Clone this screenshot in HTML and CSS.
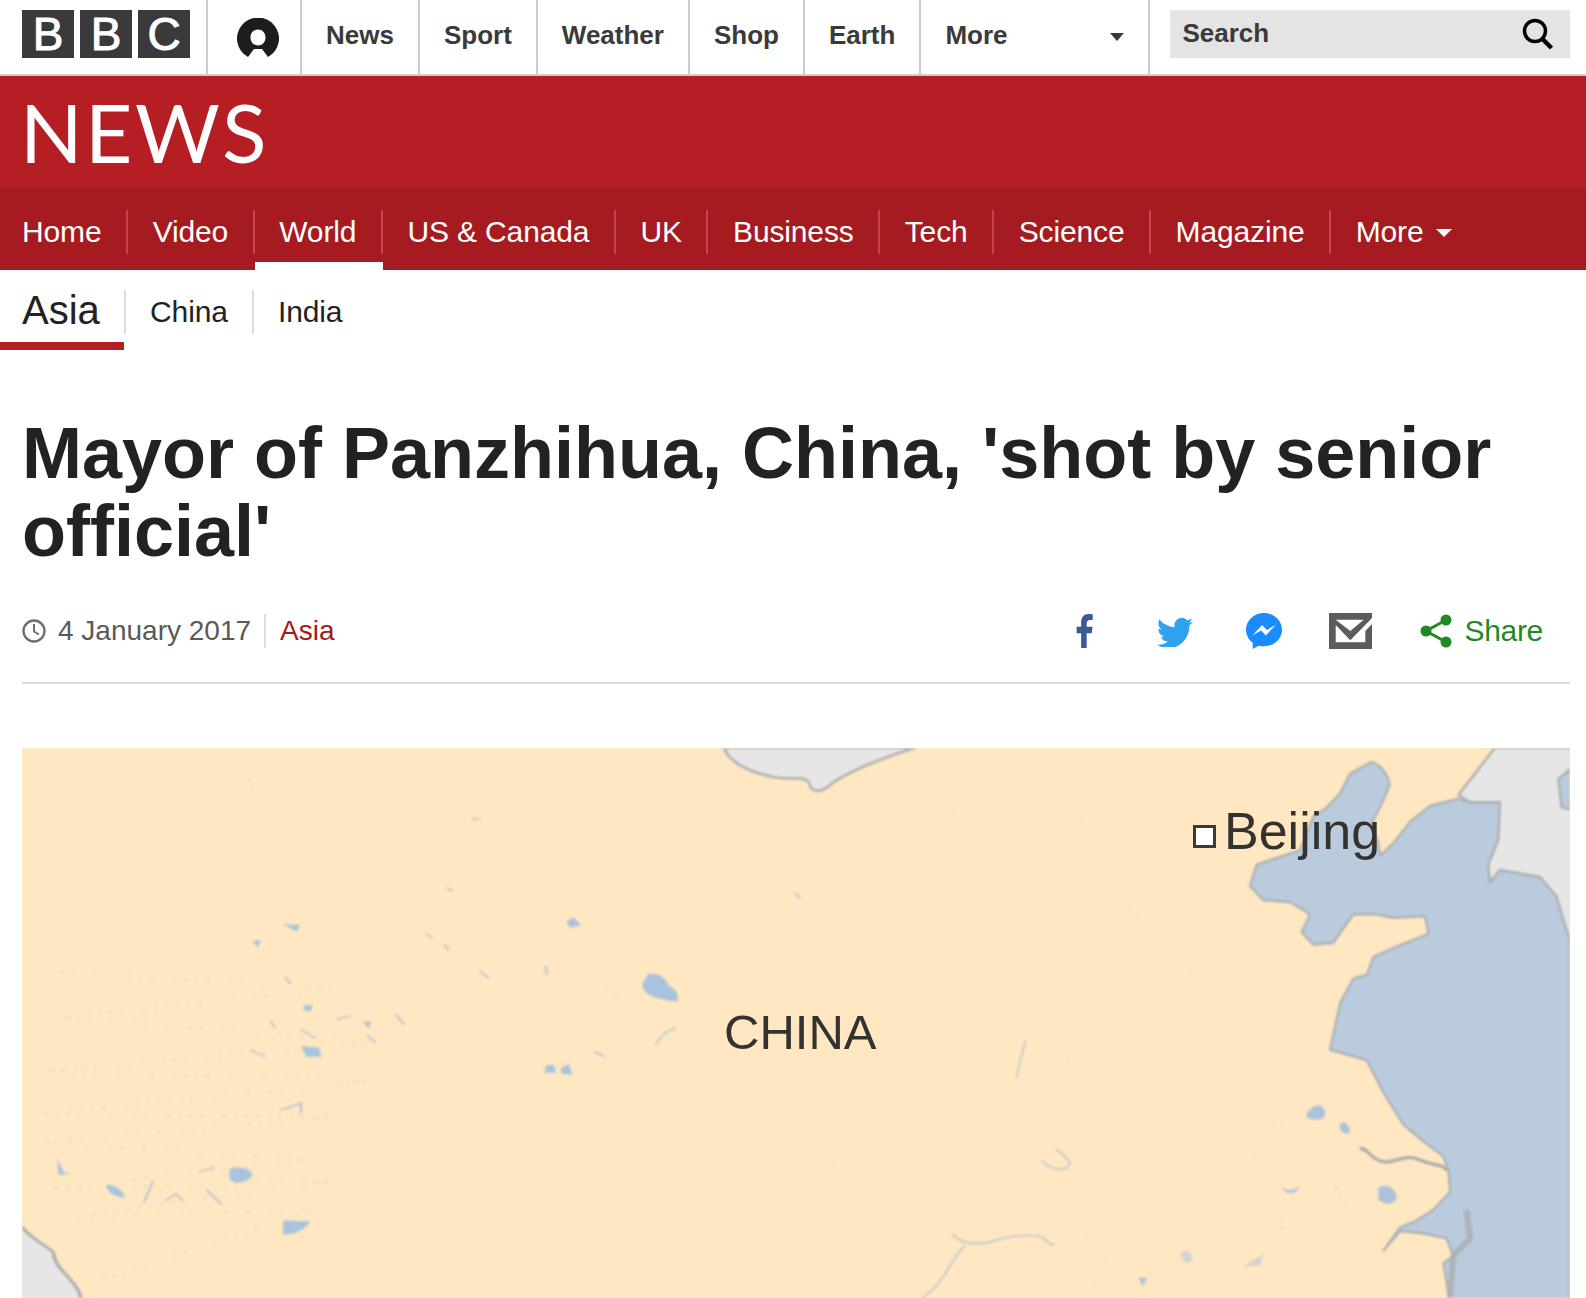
FILE: index.html
```html
<!DOCTYPE html>
<html lang="en">
<head>
    <meta charset="UTF-8">
    <title>Mayor of Panzhihua, China, 'shot by senior official' - BBC News</title>
    <link rel="stylesheet" href="styles.css">
</head>
<body>
    <header class="masthead">
        <div class="bbc-logo">
            <span class="bbc-block">B</span>
            <span class="bbc-block">B</span>
            <span class="bbc-block">C</span>
        </div>
        <div class="user-cell">
            <svg class="user-icon" viewBox="0 0 42 39">
                <path fill-rule="evenodd" d="M11 39A21 21 0 1 1 31 39L25 31H17zM21 11.500c-4.300 0-7.500 3.500-7.500 8s3.200 8 7.500 8 7.500-3.500 7.500-8-3.200-8-7.500-8z" fill="#1d1d1d"/>
            </svg>
        </div>
        <a class="top-link">News</a>
        <a class="top-link">Sport</a>
        <a class="top-link">Weather</a>
        <a class="top-link">Shop</a>
        <a class="top-link">Earth</a>
        <a class="top-link top-more">More <span class="top-arrow"></span></a>
        <div class="search-cell">
            <div class="search-box">
                <span>Search</span>
                <svg class="search-icon" viewBox="0 0 32 32">
                    <circle cx="13" cy="13" r="10.500" fill="none" stroke="#000" stroke-width="3.500"/>
                    <path d="M20.500 21l9 9" stroke="#000" stroke-width="4.500" fill="none"/>
                </svg>
            </div>
        </div>
    </header>

    <div class="news-band">
        <div class="news-logo">NEWS</div>
    </div>

    <nav class="section-nav">
        <a class="section-link">Home</a>
        <a class="section-link">Video</a>
        <a class="section-link active">World</a>
        <a class="section-link">US &amp; Canada</a>
        <a class="section-link">UK</a>
        <a class="section-link">Business</a>
        <a class="section-link">Tech</a>
        <a class="section-link">Science</a>
        <a class="section-link">Magazine</a>
        <a class="section-link last">More <span class="section-arrow"></span></a>
    </nav>

    <nav class="sub-nav">
        <a class="sub-current">Asia</a>
        <a class="sub-link">China</a>
        <a class="sub-link">India</a>
    </nav>

    <main class="story">
        <h1 class="headline">Mayor of Panzhihua, China, 'shot by senior official'</h1>

        <div class="meta-row">
            <div class="meta-left">
                <svg class="clock-icon" viewBox="0 0 24 24">
                    <circle cx="12" cy="12" r="10.500" fill="none" stroke="#6e6e6e" stroke-width="2.400"/>
                    <path d="M12 5v7.500l5 3" fill="none" stroke="#6e6e6e" stroke-width="2"/>
                </svg>
                <span class="meta-date">4 January 2017</span>
                <a class="meta-section">Asia</a>
            </div>
            <div class="share-row">
                <svg class="icon-fb" viewBox="5 0 14 24" preserveAspectRatio="none">
                    <path d="M9 24V13.500H5.500V9H9V6c0-3.800 2.200-6 5.600-6 1.700 0 3.400.2 3.400.2V4.300h-2c-1.900 0-2.700 1-2.700 2.500V9h4.600l-.7 4.500h-3.900V24z" fill="#3b5998"/>
                </svg>
                <svg class="icon-tw" viewBox="0 1 24 20" preserveAspectRatio="none">
                    <path d="M23.953 4.570a10 10 0 01-2.825.775 4.958 4.958 0 002.163-2.723c-.951.555-2.005.959-3.127 1.184a4.920 4.920 0 00-8.384 4.482C7.690 8.095 4.067 6.130 1.640 3.162a4.822 4.822 0 00-.666 2.475c0 1.710.870 3.213 2.188 4.096a4.904 4.904 0 01-2.228-.616v.060a4.923 4.923 0 003.946 4.827 4.996 4.996 0 01-2.212.085 4.936 4.936 0 004.604 3.417 9.867 9.867 0 01-6.102 2.105c-.390 0-.779-.023-1.170-.067a13.995 13.995 0 007.557 2.209c9.053 0 13.998-7.496 13.998-13.985 0-.210 0-.420-.015-.630A9.935 9.935 0 0024 4.590z" fill="#2ea1ef"/>
                </svg>
                <svg class="icon-ms" viewBox="0 0 24 24">
                    <path d="M12 0C5.370 0 0 4.970 0 11.110c0 3.500 1.740 6.610 4.470 8.650V24l4.090-2.240c1.090.300 2.250.460 3.440.460 6.630 0 12-4.970 12-11.110S18.630 0 12 0zm1.190 14.960l-3.060-3.260-5.960 3.260 6.560-6.960 3.130 3.260 5.890-3.260-6.560 6.960z" fill="#1a8cff"/>
                </svg>
                <svg class="icon-mail" viewBox="0 0 43 36">
                    <rect width="43" height="36" fill="#5c5c5c"/>
                    <path d="M6.700 6.700H34.700L21.300 18zM6.700 12L21.300 27.300 43 5V11L36.300 18V29.300H6.700z" fill="#fff"/>
                </svg>
                <div class="share-group">
                    <svg class="icon-share" viewBox="0 0 32 34">
                        <circle cx="26" cy="6" r="5.500" fill="#1f8a24"/>
                        <circle cx="26" cy="28" r="5.500" fill="#1f8a24"/>
                        <circle cx="6" cy="17" r="5.500" fill="#1f8a24"/>
                        <path d="M26 6L6 17l20 11" fill="none" stroke="#1f8a24" stroke-width="3"/>
                    </svg>
                    <span class="share-text">Share</span>
                </div>
            </div>
        </div>

        <div class="map">
            <svg class="map-art" viewBox="0 0 1548 550">
                <!-- east coast, traced -->
                <g transform="translate(1078,-8) scale(.3333,.3559)">
                    <path class="sea" d="M815 62C845 70 870 105 868 130L845 180 815 235 835 290 840 325 880 290 930 230 990 185 1075 165 1110 175 1200 175 1410 175 1410 1580 1050 1580 1030 1470 1060 1450 1040 1400 960 1385 900 1380 850 1435 900 1370 950 1350 1000 1320 1050 1270 1045 1210 1030 1170 960 1120 910 1080 850 990 800 900 690 870 720 740 760 670 800 660 820 610 890 580 985 545 975 495 880 500 830 490 760 490 700 570 640 575 605 540 630 490 570 455 490 450 450 410 470 350 600 310 640 215 680 190 720 150 750 95z"/>
                    <path class="sea" d="M1360 60H1430V210H1360z"/>
                    <path class="other" d="M1185 22H1420V75L1375 110 1385 190 1420 195V590L1395 520 1370 440 1320 385 1200 365 1170 400 1165 350 1195 280 1200 175 1110 175 1075 155z"/>
                    <path class="shore" d="M780 1150C800 1140 810 1180 850 1185S910 1160 960 1180 1030 1190 1040 1210"/>
                    <path class="coast-thick" d="M1100 1320L1110 1400 1060 1450 1050 1568"/>
                    <path class="lake" d="M620 1050C640 1020 670 1020 675 1045S640 1070 620 1060zM720 1080C735 1065 750 1085 750 1105 730 1110 715 1095 720 1080zM835 1260C860 1240 890 1265 890 1285S850 1310 835 1290zM545 1255C565 1270 585 1265 600 1255 585 1280 560 1280 545 1255z"/>
                    <path class="lake-pale" d="M430 1480L490 1445 480 1475z"/>
                    <path class="dots" d="M480 1090L620 1070M420 1190L500 1170M710 1260L740 1310M540 1350L550 1390M240 1420L280 1440 210 1500"/>
                </g>
                <!-- mongolia edge and the lake by the label -->
                <g transform="translate(618,-8) scale(.3571,.3559)">
                    <path class="other" d="M235 22C250 60 300 90 380 105 430 112 470 100 475 125 480 148 510 150 540 120 600 80 680 50 770 22z"/>
                    <path class="lake" d="M20 660C45 650 70 665 80 690 100 700 110 715 105 735 70 730 25 725 10 700 0 680 15 680 20 660z"/>
                    <path class="shore-thin" d="M45 855C60 830 75 815 100 810M1080 845C1070 880 1060 915 1055 950M1125 1180C1150 1210 1190 1215 1205 1190 1195 1170 1170 1155 1165 1150M875 1388C900 1420 960 1420 1000 1405S1100 1390 1120 1395 1140 1420 1160 1418M910 1420C880 1450 870 1480 840 1520 830 1540 800 1560 790 1568"/>
                    <path class="lake" d="M1395 1510L1420 1512 1408 1535z"/>
                    <path class="lake-pale" d="M1515 1440C1530 1430 1550 1440 1545 1465 1530 1475 1515 1460 1515 1440z"/>
                    <path class="dots" d="M875 210L885 225M430 430L445 440M1235 232L1245 235M1370 480L1410 490M1545 660L1555 655M1200 900L1250 910M820 1155L830 1160M540 1200L550 1205M590 1350L600 1355M1250 1385L1260 1390M1300 1455L1315 1450M1270 1520L1280 1530"/>
                </g>
                <!-- tibet lakes and the far corner -->
                <g transform="translate(-22,-8) scale(.5102,.3559)">
                    <path class="other" d="M30 1370H44C60 1400 90 1420 105 1440 105 1480 140 1510 150 1540 158 1550 158 1570 160 1590H30z"/>
                    <path class="lake" d="M555 518L588 520 582 538zM495 565L512 563 505 582zM1110 510L1125 498 1138 520 1118 528zM1070 915L1085 912 1090 935 1068 935zM1100 920L1115 910 1122 940 1100 938zM450 1205C470 1195 495 1205 495 1225 480 1245 460 1250 450 1235zM208 1250C225 1248 240 1265 245 1285 225 1285 210 1270 208 1250zM555 1350L608 1352C600 1375 575 1390 555 1390zM112 1175L125 1215 140 1218 115 1222zM590 860L625 865 630 890 600 890zM595 745L612 745 610 762 597 762zM712 790L728 792 722 810z"/>
                    <path class="shore-thin" d="M558 665L570 685M940 650L958 668M775 770L792 800M590 815L620 838M490 870L520 890M660 785L685 775M300 1240L282 1300M325 1295L345 1275 358 1295M405 1265L435 1305M390 1215L420 1200M550 1040L590 1020 590 1050M720 830L735 850M530 790L540 810M1070 635L1072 660M1165 875L1185 890M870 575L880 590M835 545L848 555M925 222H940M875 415L888 425M1560 430L1568 445"/>
                    <path class="dots" d="M100 650L650 700 120 780 740 850 90 930 720 960 80 1050 650 1060 90 1130 600 1180 100 1260 650 1240 150 1340 620 1320 190 1520M480 90L500 150M1150 680L1220 720"/>
                </g>
            </svg>
            <span class="map-square"></span>
            <span class="map-city">Beijing</span>
            <span class="map-country">CHINA</span>
        </div>
    </main>
</body>
</html>
```

FILE: styles.css
```css
html, body {
    margin: 0;
    padding: 0;
    height: 1298px;
    overflow: hidden;
}

body {
    background-color: #fff;
    color: #222;
    font-family: "Liberation Sans", Arial, sans-serif;
}

/* top bbc bar */
.masthead {
    display: flex;
    height: 74px;
    border-bottom: 2px solid #ccc;
}

.bbc-logo {
    display: flex;
    gap: 6px;
    width: 184px;
    padding: 10px 0 0 22px;
}

.bbc-block {
    width: 52px;
    height: 48px;
    background-color: #3a3a3a;
    color: #fff;
    font-size: 46px;
    line-height: 49px;
    text-align: center;
    -webkit-text-stroke: 1px #fff;
}

.user-cell {
    display: flex;
    align-items: center;
    width: 92px;
    border-left: 2px solid #ccc;
}

.user-icon {
    width: 42px;
    height: 39px;
    margin: 0 0 -1px 29px;
}

.top-link {
    display: flex;
    align-items: center;
    padding: 0 24px 4px;
    border-left: 2px solid #ccc;
    color: #3a3a3a;
    font-size: 26px;
    font-weight: bold;
}

.top-more {
    position: relative;
    width: 179px;
}

.top-arrow {
    position: absolute;
    top: 33px;
    right: 24px;
    border-top: 8px solid #3a3a3a;
    border-left: 7px solid transparent;
    border-right: 7px solid transparent;
}

.search-cell {
    flex: 1;
    padding: 10px 16px 0 20px;
    border-left: 2px solid #ccc;
}

.search-box {
    display: flex;
    justify-content: space-between;
    align-items: center;
    height: 48px;
    padding: 0 16px 0 12px;
    background-color: #e4e4e4;
    color: #3a3a3a;
    font-size: 26px;
    font-weight: bold;
}

.search-box span {
    margin-top: -2px;
}

.search-icon {
    width: 32px;
    height: 32px;
}

/* red bands */
.news-band {
    height: 112px;
    padding-left: 20px;
    background-color: #b51e22;
}

.news-logo {
    color: #fff;
    font-family: Lato, sans-serif;
    font-size: 82px;
    line-height: 110px;
    letter-spacing: 2.500px;
}

.section-nav {
    display: flex;
    height: 82px;
    background-color: #a61b1f;
}

.section-link {
    position: relative;
    height: 44px;
    margin-top: 22px;
    padding: 0 24.600px;
    border-right: 2px solid #c1474b;
    color: #fff;
    font-size: 30px;
    line-height: 44px;
    letter-spacing: -.15px;
}

.section-link:first-child {
    padding-left: 22px;
}

.section-link.last {
    border-right: 0;
}

.section-link.active::after {
    content: "";
    position: absolute;
    left: 0;
    right: -2px;
    bottom: -16px;
    height: 8px;
    background-color: #fff;
}

.section-arrow {
    display: inline-block;
    margin: 0 0 5px 4px;
    border-top: 8px solid #fff;
    border-left: 8px solid transparent;
    border-right: 8px solid transparent;
}

.sub-nav {
    display: flex;
    height: 80px;
}

.sub-current {
    width: 102px;
    height: 72px;
    padding-left: 22px;
    border-bottom: 8px solid #b51e22;
    font-size: 40px;
    line-height: 80px;
}

.sub-link {
    height: 44px;
    margin-top: 20px;
    padding: 0 24px;
    border-left: 2px solid #ddd;
    font-size: 30px;
    line-height: 44px;
    letter-spacing: -.1px;
}

/* article */
.story {
    padding: 0 16px 0 22px;
}

.headline {
    margin: 0;
    padding-top: 64px;
    font-size: 72px;
    line-height: 78px;
    font-weight: bold;
}

.meta-row {
    display: flex;
    justify-content: space-between;
    align-items: center;
    height: 62px;
    margin-top: 30px;
    padding-bottom: 20px;
    border-bottom: 2px solid #ddd;
}

.meta-left {
    display: flex;
    align-items: center;
    font-size: 28px;
}

.clock-icon {
    width: 24px;
    height: 24px;
    margin-right: 12px;
}

.meta-date {
    padding-right: 13px;
    border-right: 2px solid #ddd;
    color: #5a5a5a;
    line-height: 34px;
}

.meta-section {
    padding-left: 14px;
    color: #a01c20;
}

.share-row {
    display: flex;
    align-items: center;
    padding-right: 27px;
}

.icon-fb {
    width: 18px;
    height: 34px;
    margin-right: 63px;
}

.icon-tw {
    width: 36px;
    height: 31px;
    margin-right: 53px;
}

.icon-ms {
    width: 36px;
    height: 36px;
    margin-right: 46.500px;
}

.icon-mail {
    width: 43px;
    height: 36px;
    margin-right: 48.500px;
}

.share-group {
    display: flex;
    align-items: center;
}

.icon-share {
    width: 32px;
    height: 34px;
    margin-right: 12px;
}

.share-text {
    color: #1f8a24;
    font-size: 30px;
    letter-spacing: -.3px;
}

/* map picture */
.map {
    position: relative;
    height: 550px;
    margin-top: 64px;
    background-color: #fee7c1;
    overflow: hidden;
}

.map-art {
    display: block;
    width: 100%;
    height: 100%;
    filter: blur(1px);
}

.sea {
    fill: #b9cbdd;
    stroke: #a9adb2;
    stroke-width: 6;
    stroke-linejoin: round;
}

.other {
    fill: #e6e6e6;
    stroke: #aeaeae;
    stroke-width: 7;
    stroke-linejoin: round;
}

.lake {
    fill: #a9c3dc;
}

.lake-pale {
    fill: #a9c3dc;
    opacity: .55;
}

.shore {
    fill: none;
    stroke: #a9a9a9;
    stroke-width: 9;
}

.coast-thick {
    fill: none;
    stroke: #a9a9a9;
    stroke-width: 18;
    opacity: .7;
}

.shore-thin {
    fill: none;
    stroke: #b5c3cf;
    stroke-width: 4;
}

.dots {
    fill: none;
    stroke: #d3d3c6;
    stroke-width: 4;
    stroke-linecap: round;
    stroke-dasharray: 0 22;
}

.map-square {
    position: absolute;
    left: 1171px;
    top: 77px;
    width: 17px;
    height: 17px;
    border: 3px solid #3b3a36;
    background-color: #fff;
    filter: blur(.5px);
}

.map-city,
.map-country {
    position: absolute;
    color: #33322e;
    line-height: 1;
    filter: blur(.6px);
}

.map-city {
    left: 1202px;
    top: 57px;
    font-size: 52px;
}

.map-country {
    left: 702px;
    top: 260px;
    font-size: 49px;
}
```
